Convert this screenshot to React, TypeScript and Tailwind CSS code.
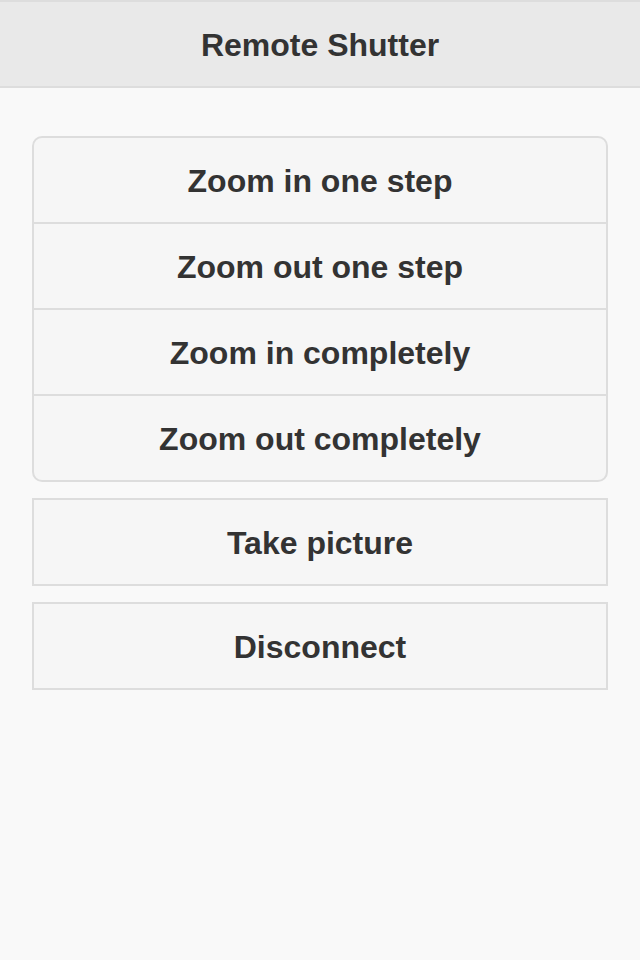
const groupItems = ['Zoom in one step', 'Zoom out one step', 'Zoom in completely', 'Zoom out completely']

export default function App() {
  return (
    <div className="min-h-[960px] bg-[#f9f9f9] text-[#333] font-['Liberation_Sans',Arial,sans-serif] font-bold">
      <header className="h-[88px] pt-[2px] flex items-center justify-center bg-[#e9e9e9] border-y-2 border-[#dddddd]">
        <h1 className="text-[32px] leading-none">Remote Shutter</h1>
      </header>

      <div className="px-8 pt-[48px] flex flex-col gap-4">
        <div className="flex flex-col rounded-[10px] border-2 border-[#dddddd] bg-[#f6f6f6] overflow-hidden">
          {groupItems.map((label, i) => (
            <button
              key={label}
              className={`h-[84px] pt-[2px] text-[32px] text-center ${i > 0 ? 'border-t-2 border-[#dddddd] h-[86px]' : ''}`}
            >
              {label}
            </button>
          ))}
        </div>

        <button className="h-[88px] pt-[2px] border-2 border-[#dddddd] bg-[#f6f6f6] text-[32px]">Take picture</button>
        <button className="h-[88px] pt-[2px] border-2 border-[#dddddd] bg-[#f6f6f6] text-[32px]">Disconnect</button>
      </div>
    </div>
  )
}
